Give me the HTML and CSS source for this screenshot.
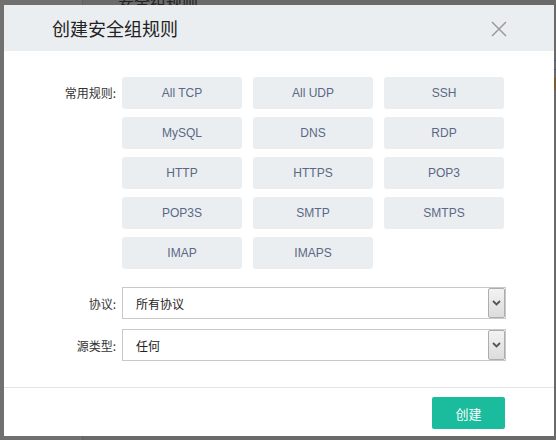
FILE: index.html
```html
<!DOCTYPE html>
<html lang="zh">
<head>
<meta charset="utf-8">
<link rel="stylesheet" href="styles.css">
</head>
<body>
<div class="backdrop">
  <div class="side"></div>
  <div class="page-title">安全组规则</div>
  <div class="right-deco"><span class="l1"></span><span class="l2"></span><span class="l3"></span></div>
</div>
<div class="modal">
  <div class="modal-header">
    <span class="title">创建安全组规则</span>
    <svg class="close" width="16" height="16" viewBox="0 0 16 16"><path d="M1 1L15 15M15 1L1 15" stroke="#9a9a9a" stroke-width="1.5" fill="none"/></svg>
  </div>
  <div class="modal-body">
    <div class="row">
      <div class="label label-top">常用规则:</div>
      <div class="rules">
        <span class="rule">All TCP</span>
        <span class="rule">All UDP</span>
        <span class="rule">SSH</span>
        <span class="rule">MySQL</span>
        <span class="rule">DNS</span>
        <span class="rule">RDP</span>
        <span class="rule">HTTP</span>
        <span class="rule">HTTPS</span>
        <span class="rule">POP3</span>
        <span class="rule">POP3S</span>
        <span class="rule">SMTP</span>
        <span class="rule">SMTPS</span>
        <span class="rule">IMAP</span>
        <span class="rule">IMAPS</span>
      </div>
    </div>
    <div class="row row-select first">
      <div class="label">协议:</div>
      <div class="select"><span>所有协议</span><span class="arrow"><svg width="9" height="6" viewBox="0 0 9 6"><path d="M1 1L4.5 4.5L8 1" stroke="#555" stroke-width="1.8" fill="none"/></svg></span></div>
    </div>
    <div class="row row-select">
      <div class="label">源类型:</div>
      <div class="select"><span>任何</span><span class="arrow"><svg width="9" height="6" viewBox="0 0 9 6"><path d="M1 1L4.5 4.5L8 1" stroke="#555" stroke-width="1.8" fill="none"/></svg></span></div>
    </div>
  </div>
  <div class="modal-footer">
    <button class="btn-primary">创建</button>
  </div>
</div>
</body>
</html>
```
FILE: styles.css
```css
* { box-sizing: border-box; }
html, body { margin: 0; padding: 0; }
body {
  width: 556px;
  height: 440px;
  overflow: hidden;
  position: relative;
  background: #6a6a6a;
  font-family: "Liberation Sans", "Noto Sans CJK SC", sans-serif;
}
.backdrop { position: absolute; inset: 0; }
.side {
  position: absolute; left: 0; top: 0; bottom: 0; width: 83px;
  background: #707070; border-right: 1px solid #606060;
}
.page-title {
  position: absolute; left: 118px; top: -11px;
  font-size: 16px; color: #222;
}
.right-deco span { position: absolute; left: 554px; width: 2px; }
.right-deco .l1 { top: 60px; height: 1px; background: #3a5a8a; }
.right-deco .l2 { top: 69px; height: 1px; background: #3a5a8a; }
.right-deco .l3 { top: 78px; height: 12px; background: #7a5a30; }

.modal {
  position: absolute; left: 4px; top: 5px;
  width: 550px; height: 431px;
  background: #fff;
  display: flex; flex-direction: column;
}
.modal-header {
  height: 46px;
  background: #ebeef1;
  display: flex; align-items: center; justify-content: space-between;
  padding: 0 47px 0 48px;
}
.title {
  font-size: 18px; color: #222;
  font-family: "Noto Sans CJK SC", sans-serif;
  font-weight: 400;
  margin-top: -1px;
}
.close { display: block; margin-top: 1px; }

.modal-body {
  padding: 26px 0 26px 0;
  border-bottom: 1px solid #e3e3e3;
}
.row { display: flex; }
.label {
  width: 113px; padding-right: 1px;
  text-align: right;
  font-size: 12px; color: #333;
  font-family: "Noto Sans CJK SC", sans-serif;
  display: flex; align-items: center; justify-content: flex-end;
  margin-right: 5px;
}
.label-top { align-items: flex-start; padding-top: 7px; height: 32px; }
.rules {
  display: grid;
  grid-template-columns: repeat(3, 120px);
  grid-auto-rows: 32px;
  column-gap: 11px;
  row-gap: 8px;
}
.rule {
  background: #ebeef1;
  border-radius: 3px;
  display: flex; align-items: center; justify-content: center;
  font-size: 12px; color: #5a6886;
}
.row-select { margin-top: 10px; }
.row-select.first { margin-top: 18px; }
.select {
  width: 384px; height: 32px;
  border: 1px solid #c9c9c9;
  display: flex; align-items: center; justify-content: space-between;
  padding-left: 13px;
  font-size: 12px; color: #222;
  font-family: "Noto Sans CJK SC", sans-serif;
}
.arrow {
  width: 17px; height: 30px;
  border: 1px solid #adadad;
  border-radius: 2px;
  background: linear-gradient(#f3f3f3, #dcdcdc);
  display: flex; align-items: center; justify-content: center;
}
.arrow svg { display: block; }

.modal-footer {
  flex: 1;
  display: flex; justify-content: flex-end; align-items: flex-start;
  padding: 9px 49px 0 0;
}
.btn-primary {
  width: 73px; height: 32px;
  border: 0; border-radius: 2px;
  background: #1bbc9d; color: #fff;
  font-size: 13px;
  font-family: "Noto Sans CJK SC", sans-serif;
  padding: 0;
}
```
